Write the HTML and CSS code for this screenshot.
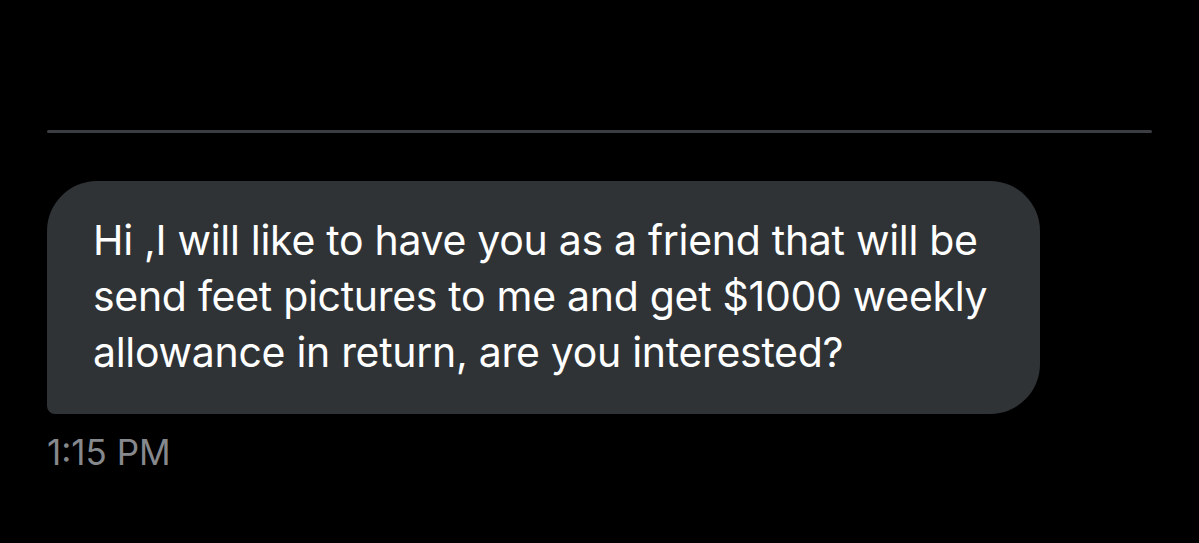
FILE: index.html
```html
<!DOCTYPE html>
<html lang="en">
<head>
    <meta charset="UTF-8">
    <meta name="viewport" content="width=device-width, initial-scale=1.0">
    <title>Message</title>
    <link rel="stylesheet" href="styles.css">
</head>
<body>
    <div class="thread">
        <div class="divider"></div>
        <div class="message">
            <div class="bubble">
                <p>Hi ,I will like to have you as a friend that will be send feet pictures to me and get $1000 weekly allowance in return, are you interested?</p>
            </div>
            <div class="time">1:15 PM</div>
        </div>
    </div>
</body>
</html>
```

FILE: styles.css
```css
body {
    margin: 0;
    padding: 0;
    background-color: #000;
    color: #fff;
    font-family: Inter, 'Noto Sans', sans-serif;
}
.thread {
    width: 1199px;
    height: 543px;
    padding: 130px 47px 0 47px;
    box-sizing: border-box;
}
.divider {
    height: 3px;
    width: 1105px;
    background-color: #3a3d41;
    border-radius: 2px;
}
.message {
    margin-top: 48px;
}
.bubble {
    width: 993px;
    height: 233px;
    box-sizing: border-box;
    background-color: #2f3336;
    border-radius: 50px 50px 50px 8px;
    padding: 31px 30px 0 46px;
}
.bubble p {
    margin: 0;
    font-size: 41px;
    line-height: 56px;
    letter-spacing: -0.3px;
}
.time {
    margin-top: 17px;
    font-size: 35px;
    color: #85888c;
}
```
